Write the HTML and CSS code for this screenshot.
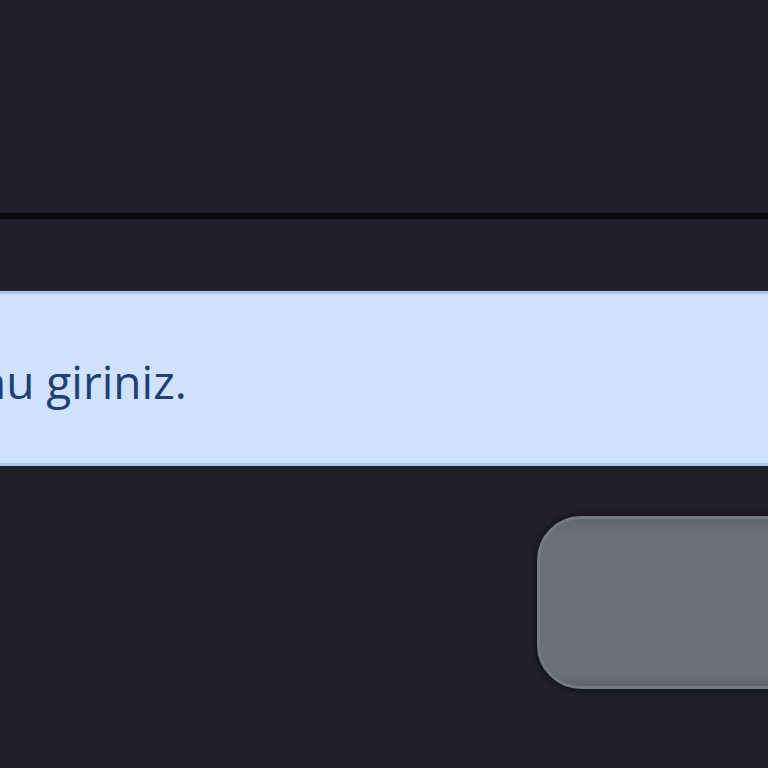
FILE: index.html
```html
<!DOCTYPE html>
<html lang="tr">
<head>
<meta charset="utf-8">
<title>Konum</title>
<link rel="stylesheet" href="styles.css">
</head>
<body>
<div class="page">
  <header class="topbar"></header>
  <div class="divider"></div>
  <main class="content">
    <div class="alert" role="alert"><span class="alert-text">nu giriniz.</span></div>
    <div class="actions">
      <button class="btn-secondary" type="button"></button>
    </div>
  </main>
</div>
</body>
</html>
```
FILE: styles.css
```css
html, body {
  margin: 0;
  padding: 0;
  background: #1f2029;
  overflow: hidden;
  width: 768px;
  height: 768px;
}
.page {
  display: flex;
  flex-direction: column;
  width: 768px;
  height: 768px;
  overflow: hidden;
  font-family: "Segoe UI", "Open Sans", "Noto Sans", sans-serif;
}
.topbar {
  height: 213px;
  background: #1f2029;
}
.divider {
  height: 6px;
  background: #0a0b0f;
}
.content {
  display: flex;
  flex-direction: column;
  padding-top: 72px;
}
.alert {
  height: 169px;
  background: #cfe2ff;
  border-top: 3px solid #a9c5ee;
  border-bottom: 3px solid #a9c5ee;
  display: flex;
  align-items: center;
  overflow: hidden;
}
.alert-text {
  margin-left: -22px;
  margin-top: 4px;
  font-size: 46px;
  line-height: 72px;
  color: #213f74;
  white-space: nowrap;
}
.actions {
  display: flex;
  padding-top: 50px;
  padding-left: 537px;
}
.btn-secondary {
  flex: none;
  width: 300px;
  height: 173px;
  border: 3px solid #737b83;
  border-radius: 44px;
  background: linear-gradient(#60676f 0%, #697078 8%, #697078 92%, #5d646c 100%);
  box-shadow: 0 0 6px 2px rgba(0,0,0,0.4);
  padding: 0;
}
```
